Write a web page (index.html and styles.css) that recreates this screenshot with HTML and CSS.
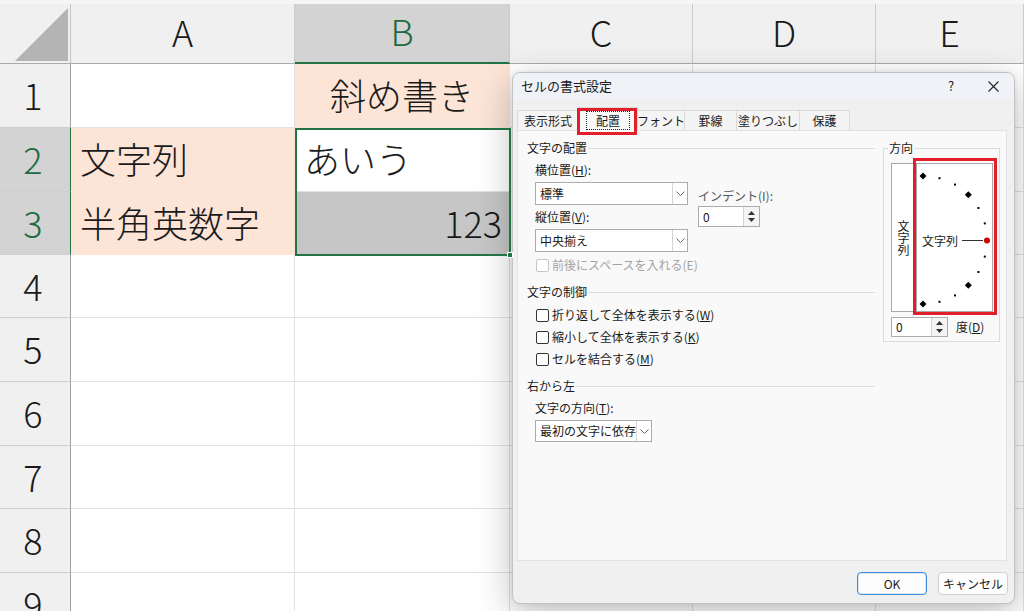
FILE: index.html
```html
<!DOCTYPE html>
<html lang="ja">
<head>
<meta charset="utf-8">
<title>セルの書式設定</title>
<link rel="stylesheet" href="styles.css">
</head>
<body>
<div class="sheet">
  <div class="corner"><span class="tri"></span></div>
  <div class="ch">A</div>
  <div class="ch sel">B</div>
  <div class="ch">C</div>
  <div class="ch">D</div>
  <div class="ch">E</div>

  <div class="rh">1</div>
  <div class="c"></div>
  <div class="c fill center">斜め書き</div>
  <div class="c"></div><div class="c"></div><div class="c"></div>

  <div class="rh sel">2</div>
  <div class="c fill">文字列</div>
  <div class="c active">あいう<span class="selection"><span class="handle"></span></span></div>
  <div class="c"></div><div class="c"></div><div class="c"></div>

  <div class="rh sel">3</div>
  <div class="c fill">半角英数字</div>
  <div class="c gray">123</div>
  <div class="c"></div><div class="c"></div><div class="c"></div>

  <div class="rh">4</div>
  <div class="c"></div><div class="c"></div><div class="c"></div><div class="c"></div><div class="c"></div>
  <div class="rh">5</div>
  <div class="c"></div><div class="c"></div><div class="c"></div><div class="c"></div><div class="c"></div>
  <div class="rh">6</div>
  <div class="c"></div><div class="c"></div><div class="c"></div><div class="c"></div><div class="c"></div>
  <div class="rh">7</div>
  <div class="c"></div><div class="c"></div><div class="c"></div><div class="c"></div><div class="c"></div>
  <div class="rh">8</div>
  <div class="c"></div><div class="c"></div><div class="c"></div><div class="c"></div><div class="c"></div>
  <div class="rh">9</div>
  <div class="c"></div><div class="c"></div><div class="c"></div><div class="c"></div><div class="c"></div>
</div>

<div class="dialog">
  <div class="titlebar">
    <span class="title">セルの書式設定</span>
    <span class="help">?</span>
    <span class="close"><svg width="11" height="11" viewBox="0 0 11 11"><path d="M0.5 0.5 L10.5 10.5 M10.5 0.5 L0.5 10.5" stroke="#222" stroke-width="1.1" fill="none"/></svg></span>
  </div>

  <div class="tabs">
    <div class="tab t1">表示形式</div>
    <div class="tab t2 current"><span class="focus">配置</span><span class="mark mark-tab"></span></div>
    <div class="tab t3">フォント</div>
    <div class="tab t4">罫線</div>
    <div class="tab t5">塗りつぶし</div>
    <div class="tab t6">保護</div>
  </div>

  <div class="panel">
    <div class="left">
      <div class="ghead">文字の配置</div>
      <div class="lbl">横位置(<u>H</u>):</div>
      <div class="align-row">
        <div class="col1">
          <div class="combo w153"><span class="val">標準</span><span class="arrow"><svg width="9" height="5" viewBox="0 0 9 5"><polyline points="0.5,0.5 4.5,4.5 8.5,0.5" fill="none" stroke="#666" stroke-width="1"/></svg></span></div>
          <div class="lbl flat">縦位置(<u>V</u>):</div>
          <div class="combo w153"><span class="val">中央揃え</span><span class="arrow"><svg width="9" height="5" viewBox="0 0 9 5"><polyline points="0.5,0.5 4.5,4.5 8.5,0.5" fill="none" stroke="#666" stroke-width="1"/></svg></span></div>
        </div>
        <div class="col2">
          <div class="lbl-gray">インデント(I):</div>
          <div class="spin w62"><span class="val">0</span><span class="btns"><svg width="7" height="4" viewBox="0 0 7 4"><polygon points="0,4 3.5,0 7,4" fill="#333"/></svg><svg width="7" height="4" viewBox="0 0 7 4"><polygon points="0,0 3.5,4 7,0" fill="#333"/></svg></span></div>
        </div>
      </div>
      <div class="chk dis first"><span class="box"></span>前後にスペースを入れる(E)</div>

      <div class="ghead gap">文字の制御</div>
      <div class="chk top"><span class="box"></span>折り返して全体を表示する(<u>W</u>)</div>
      <div class="chk"><span class="box"></span>縮小して全体を表示する(<u>K</u>)</div>
      <div class="chk"><span class="box"></span>セルを結合する(<u>M</u>)</div>

      <div class="ghead gap">右から左</div>
      <div class="lbl">文字の方向(<u>T</u>):</div>
      <div class="combo w117 ind"><span class="val">最初の文字に依存</span><span class="arrow"><svg width="9" height="5" viewBox="0 0 9 5"><polyline points="0.5,0.5 4.5,4.5 8.5,0.5" fill="none" stroke="#666" stroke-width="1"/></svg></span></div>
    </div>

    <fieldset class="orient">
      <legend>方向</legend>
      <div class="obox-row">
        <div class="vbox">文字列</div>
        <div class="mbox">
          <svg class="dial" width="75" height="147" viewBox="0 0 75 147">
            <g fill="#000">
              <polygon points="6,8.5 9.5,12 6,15.5 2.5,12"/>
              <polygon points="51.3,27.2 54.8,30.7 51.3,34.2 47.8,30.7"/>
              <polygon points="51.3,117.8 54.8,121.3 51.3,124.8 47.8,121.3"/>
              <polygon points="6,136.5 9.5,140 6,143.5 2.5,140"/>
              <rect x="21.5" y="13.2" width="2" height="2"/>
              <rect x="37" y="19.6" width="2" height="2"/>
              <rect x="60.4" y="43" width="2" height="2"/>
              <rect x="66.8" y="58.4" width="2" height="2"/>
              <rect x="66.8" y="91.6" width="2" height="2"/>
              <rect x="60.4" y="107" width="2" height="2"/>
              <rect x="37" y="130.4" width="2" height="2"/>
              <rect x="21.5" y="136.8" width="2" height="2"/>
            </g>
            <line x1="45" y1="76.5" x2="66" y2="76.5" stroke="#333" stroke-width="1"/>
            <circle cx="70" cy="76.5" r="3" fill="#d00000"/>
            <text x="5" y="76.5" class="dial-text" dominant-baseline="central">文字列</text>
          </svg>
          <span class="mark mark-dial"></span>
        </div>
      </div>
      <div class="deg-row">
        <div class="spin w57"><span class="val">0</span><span class="btns"><svg width="7" height="4" viewBox="0 0 7 4"><polygon points="0,4 3.5,0 7,4" fill="#333"/></svg><svg width="7" height="4" viewBox="0 0 7 4"><polygon points="0,0 3.5,4 7,0" fill="#333"/></svg></span></div>
        <span class="deg">度(<u>D</u>)</span>
      </div>
    </fieldset>
  </div>

  <div class="buttons">
    <button class="btn ok">OK</button>
    <button class="btn">キャンセル</button>
  </div>
</div>
</body>
</html>
```

FILE: styles.css
```css
* { box-sizing: border-box; }
html, body { margin: 0; padding: 0; }
body {
  width: 1024px;
  height: 611px;
  overflow: hidden;
  position: relative;
  background: #fff;
  font-family: "Noto Sans CJK JP", "Noto Sans", sans-serif;
}

/* ---------- spreadsheet ---------- */
.sheet {
  display: grid;
  grid-template-columns: 71px 224px 215px 183px 183px 1fr;
  grid-template-rows: 60px 64px 64px 63px 63px 64px 64px 63px 64px 64px;
  padding-top: 4px;
  height: 611px;
  background: #f5f5f5;
  font-size: 36px;
  font-weight: 300;
  color: #1a1a1a;
}
.corner {
  background: #f0f0f0;
  border-right: 1px solid #c4c4c4;
  border-bottom: 1px solid #ababab;
  display: flex;
  justify-content: flex-end;
  align-items: flex-end;
  padding: 0 2px 2px 0;
}
.tri {
  width: 53px;
  height: 53px;
  background: #b4b4b4;
  clip-path: polygon(100% 0, 100% 100%, 0 100%);
}
.ch {
  background: #f0f0f0;
  border-right: 1px solid #cacaca;
  border-bottom: 1px solid #ababab;
  display: flex;
  align-items: center;
  justify-content: center;
  line-height: 1;
  padding-bottom: 6px;
}
.ch.sel {
  background: #d3d3d3;
  color: #1e6b41;
  border-bottom: 2px solid #217346;
}
.rh {
  background: #f0f0f0;
  border-right: 1px solid #9e9e9e;
  border-bottom: 1px solid #cfcfcf;
  display: flex;
  align-items: center;
  justify-content: center;
  line-height: 1;
  padding: 0 4px 3px 0;
}
.rh.sel {
  background: #d3d3d3;
  color: #1e6b41;
  border-right: 1px solid #217346;
}
.c {
  background: #fff;
  border-right: 1px solid #e1e1e1;
  border-bottom: 1px solid #e1e1e1;
  display: flex;
  align-items: center;
  padding: 0 9px 3px;
  white-space: nowrap;
  line-height: 1;
}
.c.fill { background: #fce4d6; border-color: #fce4d6; }
.c.center { justify-content: center; }
.c.gray {
  background: #c6c6c6;
  border-color: #c6c6c6;
  justify-content: flex-end;
  padding-right: 7px;
}
.c.active { position: relative; }
.selection {
  position: absolute;
  left: 0;
  top: 0;
  width: 216px;
  height: 128px;
  border: 2px solid #217346;
  z-index: 2;
}
.handle {
  position: absolute;
  right: -4px;
  bottom: -4px;
  width: 6px;
  height: 6px;
  background: #217346;
  border: 1px solid #fff;
}

/* ---------- dialog ---------- */
.dialog {
  position: absolute;
  left: 512px;
  top: 72px;
  width: 503px;
  height: 532px;
  background: #f0f0f0;
  border: 1px solid #c2c2c2;
  border-radius: 8px;
  box-shadow: 0 10px 36px rgba(0, 0, 0, 0.26), 0 0 4px rgba(0, 0, 0, 0.08);
  display: flex;
  flex-direction: column;
  font-size: 12px;
  color: #1a1a1a;
  line-height: 16px;
  overflow: hidden;
}
.titlebar {
  height: 26px;
  display: flex;
  align-items: center;
  padding-left: 8px;
  background: #eff3f7;
}
.title { flex: 1; font-size: 13px; }
.help { width: 20px; text-align: center; font-size: 13px; }
.close {
  width: 20px;
  margin-left: 22px;
  margin-right: 11px;
  display: flex;
  justify-content: center;
}
.tabs {
  margin-top: 8px;
  height: 23px;
  display: flex;
  align-items: flex-end;
  padding-left: 4px;
  position: relative;
  z-index: 1;
}
.tab {
  height: 20px;
  border: 1px solid #dadada;
  border-bottom: none;
  background: #f4f4f4;
  display: flex;
  align-items: center;
  justify-content: center;
  margin-right: -1px;
  white-space: nowrap;
}
.t1 { width: 62px; }
.t2 { width: 60px; }
.t3 { width: 48px; }
.t4 { width: 53px; }
.t5 { width: 64px; }
.t6 { width: 51px; }
.tab.current {
  height: 24px;
  margin-bottom: -1px;
  background: #f9f9f9;
  position: relative;
  padding-top: 1px;
}
.focus {
  outline: 1px dotted #222;
  padding: 1px 9px 0;
  line-height: 16px;
}
.mark {
  position: absolute;
  border: 3px solid #e31d2a;
  pointer-events: none;
}
.mark-tab { left: -2px; top: 0; width: 60px; height: 27px; }

.panel {
  margin: 0 7px 0 4px;
  height: 431px;
  background: #f9f9f9;
  border: 1px solid #e2e2e2;
  display: flex;
  align-items: flex-start;
}
.left {
  width: 357px;
  padding: 9px 0 0 9px;
}
.ghead {
  display: flex;
  align-items: center;
  height: 16px;
  white-space: nowrap;
}
.ghead::after {
  content: "";
  flex: 1;
  border-top: 1px solid #dcdcdc;
  margin-left: 1px;
}
.ghead.gap { margin-top: 8px; }
.lbl { margin-top: 6px; padding-left: 8px; height: 16px; }
.lbl.flat { padding-left: 0; margin-top: 4px; }
.lbl-gray { margin-top: 10px; color: #555; height: 16px; }
.align-row {
  display: flex;
  gap: 10px;
  padding-left: 8px;
  height: 74px;
}
.col1 .combo { margin-top: 4px; }
.combo {
  display: flex;
  height: 23px;
  background: #fff;
  border: 1px solid #acacac;
}
.combo .val { flex: 1; padding-left: 4px; line-height: 21px; white-space: nowrap; }
.combo .arrow {
  width: 15px;
  border-left: 1px solid #d4d4d4;
  display: flex;
  align-items: center;
  justify-content: center;
}
.w153 { width: 153px; }
.w117 { width: 117px; height: 22px; }
.w117 .val { line-height: 20px; }
.ind { margin: 4px 0 0 8px; }
.spin {
  display: flex;
  height: 21px;
  background: #fff;
  border: 1px solid #acacac;
  margin-top: 2px;
}
.spin .val { flex: 1; padding-left: 4px; line-height: 19px; }
.spin .btns {
  width: 16px;
  border-left: 1px solid #d4d4d4;
  display: flex;
  flex-direction: column;
  align-items: center;
  justify-content: space-evenly;
  background: #f4f4f4;
}
.w62 { width: 62px; }
.w57 { width: 57px; height: 20px; margin-top: 0; }
.w57 .val { line-height: 18px; }

.chk {
  display: flex;
  align-items: center;
  height: 22px;
  padding-left: 9px;
  white-space: nowrap;
}
.chk.first { margin-top: 2px; }
.chk.top { margin-top: 4px; }
.box {
  width: 13px;
  height: 13px;
  border: 1px solid #333;
  border-radius: 2px;
  background: #fff;
  margin-right: 3px;
}
.chk.dis { color: #a3a3a3; }
.chk.dis .box { border-color: #c6c6c6; }

.orient {
  margin: 9px 0 0 8px;
  width: 117px;
  height: 202px;
  border: 1px solid #dcdcdc;
  padding: 0;
  min-width: 0;
}
.orient legend {
  margin-left: 4px;
  padding: 0 1px;
  line-height: 16px;
}
.obox-row {
  display: flex;
  margin: 7px 0 0 7px;
  height: 149px;
}
.vbox {
  width: 24px;
  border: 1px solid #a8a8a8;
  background: #fff;
  writing-mode: vertical-rl;
  text-orientation: upright;
  display: flex;
  align-items: center;
  justify-content: center;
  line-height: 12px;
}
.mbox {
  width: 77px;
  margin-left: 1px;
  border: 1px solid #a8a8a8;
  background: #fff;
  position: relative;
}
.dial { display: block; }
.dial-text { font-size: 12px; fill: #1a1a1a; font-family: "Noto Sans CJK JP", sans-serif; }
.mark-dial { left: -4px; top: -6px; right: -5px; bottom: -4px; }
.deg-row {
  display: flex;
  align-items: center;
  margin: 5px 0 0 7px;
}
.deg { margin-left: 8px; }

.buttons {
  display: flex;
  justify-content: flex-end;
  gap: 11px;
  padding: 11px 6px 0 0;
}
.btn {
  width: 70px;
  height: 23px;
  border: 1px solid #d0d0d0;
  border-radius: 4px;
  background: #fdfdfd;
  font-family: inherit;
  font-size: 12px;
  color: #1a1a1a;
  padding: 0;
}
.btn.ok { border: 1px solid #3b8ddb; box-shadow: inset 0 0 0 1px #dbe9f7; }
```
